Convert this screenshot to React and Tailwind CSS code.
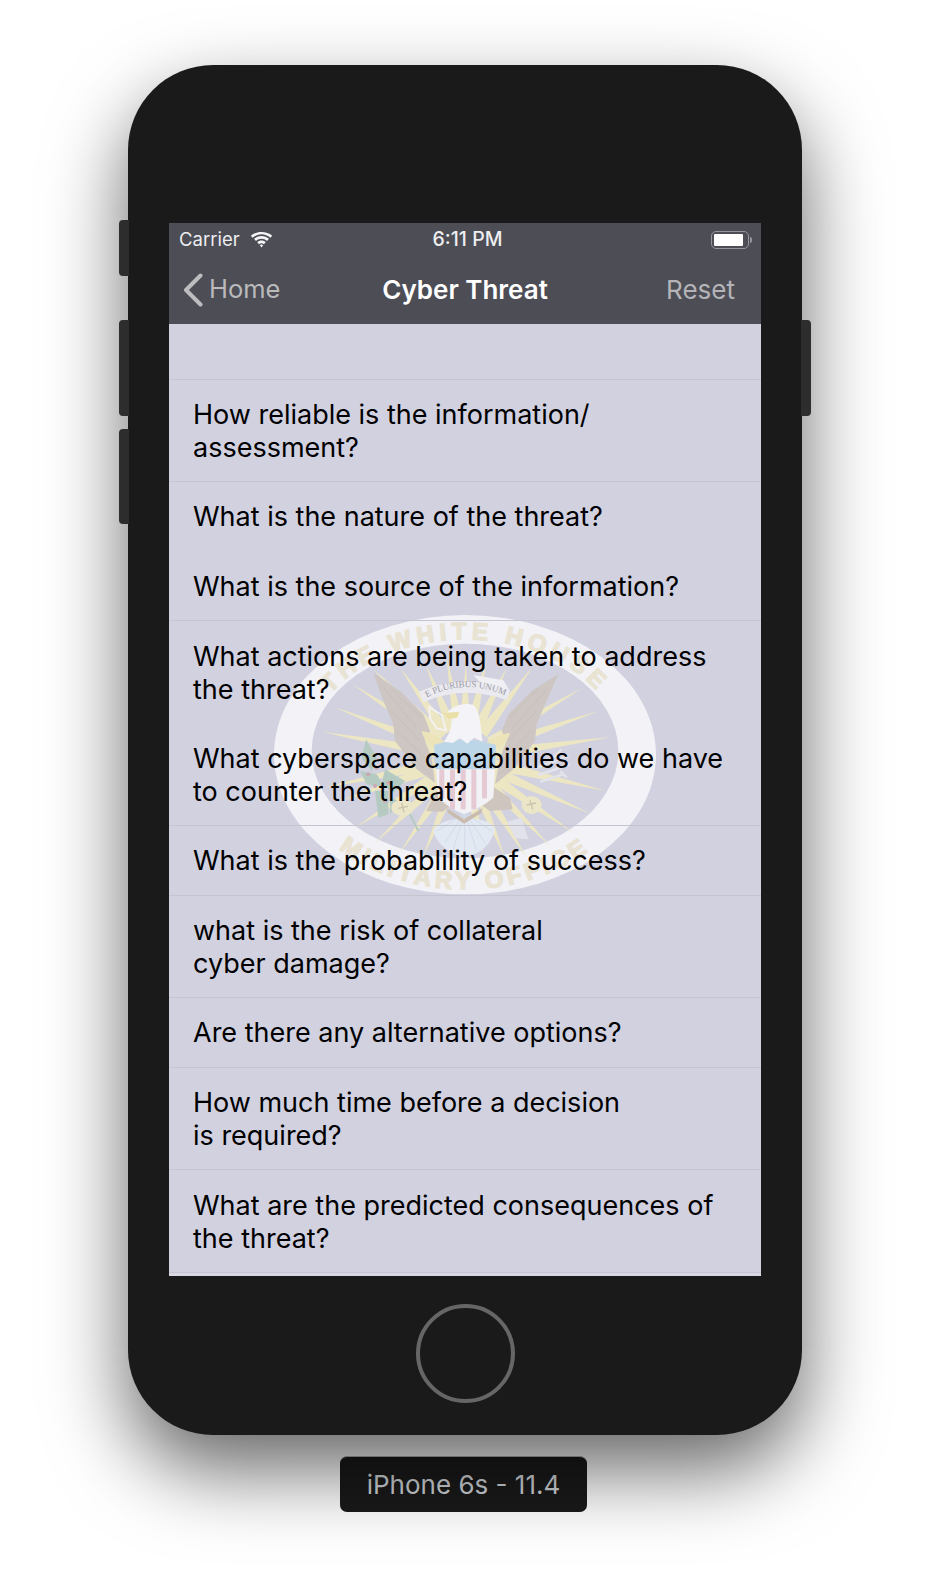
import React from "react";

const rows = [
  { h: "h-[56px]", lines: [], sep: true },
  { h: "h-[102px]", lines: ["How reliable is the information/", "assessment?"], sep: true },
  { h: "h-[70px] pb-[2px]", lines: ["What is the nature of the threat?"], sep: false },
  { h: "h-[69px]", lines: ["What is the source of the information?"], sep: true },
  { h: "h-[102px] pt-[2px]", lines: ["What actions are being taken to address", "the threat?"], sep: false },
  { h: "h-[103px] pt-[2px]", lines: ["What cyberspace capabilities do we have", "to counter the threat?"], sep: true },
  { h: "h-[70px]", lines: ["What is the probablility of success?"], sep: true },
  { h: "h-[102px]", lines: ["what is the risk of collateral", "cyber damage?"], sep: true },
  { h: "h-[70px]", lines: ["Are there any alternative options?"], sep: true },
  { h: "h-[102px] pt-[1px]", lines: ["How much time before a decision", "is required?"], sep: true },
  { h: "h-[103px] pt-[2px]", lines: ["What are the predicted consequences of", "the threat?"], sep: true },
];

const tips = [
  [340,205],[278,250],[222,318],[185,392],[420,200],[497,190],[560,170],[618,190],[680,175],[740,200],[820,195],
  [965,262],[1015,330],[1055,408],[1040,570],[995,640],[940,695],[870,735],[800,770],[735,770],[670,760],
  [285,680],[345,725],[420,755],[490,765],[240,600],[190,560],
];

function ray([x, y], i) {
  const cx = 612, cy = 470;
  const dx = x - cx, dy = y - cy;
  const len = Math.hypot(dx, dy);
  const ux = dx / len, uy = dy / len;
  const w = 17;
  return (
    <polygon
      key={i}
      points={`${x},${y} ${cx + ux * 90 - uy * w},${cy + uy * 90 + ux * w} ${cx + ux * 90 + uy * w},${cy + uy * 90 - ux * w}`}
      fill="#ece6c2"
    />
  );
}

const leftFeathers = ["M370,260 L470,380", "M395,330 L480,420", "M410,390 L495,470", "M440,450 L515,525", "M395,265 L485,350"];
const rightFeathers = ["M860,265 L760,380", "M830,330 L745,420", "M815,390 L735,470", "M785,445 L720,520", "M835,262 L750,350"];
const tailFeathers = [
  "M610,640 L530,690", "M610,640 L555,725", "M612,640 L580,745", "M614,640 L614,755",
  "M616,640 L648,745", "M618,640 L675,725", "M620,640 L695,690",
];
const stripeX = [538, 570, 602, 634, 666];
const berries = [[325,520],[350,500],[345,555],[385,545],[375,600]];
const leaves = [
  "M318,415 L350,470 L335,510 L305,470 Z",
  "M300,510 L350,520 L375,560 L320,550 Z",
  "M375,505 L435,540 L400,575 L365,550 Z",
  "M345,570 L385,570 L385,640 L355,650 Z",
  "M390,590 L420,600 L390,640 Z",
];

function Seal() {
  return (
    <svg viewBox="0 0 1230 930" className="absolute left-[91px] top-[277px] w-[410px] h-[310px]">
      <defs>
        <path id="sealTop" d="M145,450 A470,335 0 0 1 1085,450" />
        <path id="sealBottom" d="M80,450 A535,415 0 0 0 1150,450" />
        <path id="sealBanner" d="M490,295 Q610,225 745,288" />
      </defs>
      <path
        fillRule="evenodd"
        fill="#f2f2f7"
        d="M42,461 A573,419 0 1 1 1188,461 A573,419 0 1 1 42,461 Z M155,450 A460,322 0 1 0 1075,450 A460,322 0 1 0 155,450 Z"
      />
      <text fontFamily="'Liberation Sans', sans-serif" fontWeight="700" fontSize="72" letterSpacing="15" fill="#e9e3d3" stroke="#e9e3d3" strokeWidth="4" textAnchor="middle">
        <textPath href="#sealTop" startOffset="50%">THE WHITE HOUSE</textPath>
      </text>
      <text fontFamily="'Liberation Sans', sans-serif" fontWeight="700" fontSize="72" letterSpacing="13" fill="#e9e3d3" stroke="#e9e3d3" strokeWidth="4" textAnchor="middle">
        <textPath href="#sealBottom" startOffset="50%">MILITARY OFFICE</textPath>
      </text>
      {tips.map(ray)}

      <path d="M340,215 L420,270 L490,340 L510,390 L495,420 L515,470 L525,545 L470,505 L405,420 L400,370 L370,300 Z" fill="#cdc6c3" />
      <path d="M895,220 L815,270 L745,340 L725,390 L740,420 L720,470 L705,550 L760,505 L825,420 L830,370 L860,300 Z" fill="#cdc6c3" />
      <g stroke="#c7bfbc" strokeWidth="3" fill="none">
        {leftFeathers.map((d) => <path key={d} d={d} />)}
        {rightFeathers.map((d) => <path key={d} d={d} />)}
      </g>
      <path d="M695,555 L750,590 L758,625 L690,630 L660,610 Z M530,570 L498,630 L548,632 L575,610 Z" fill="#cdc5be" />

      <path d="M520,690 C540,640 690,640 705,685 C695,730 660,760 615,768 C570,760 530,730 520,690 Z" fill="#e3e9f3" />
      <g stroke="#d3dcea" strokeWidth="3" fill="none">
        {tailFeathers.map((d) => <path key={d} d={d} />)}
      </g>
      <path d="M560,622 L612,655 L668,622 L664,636 L612,668 L564,636 Z" fill="#c9bcae" />

      <path d="M485,390 Q520,395 558,425 L540,445 Q495,435 485,390 Z M750,395 Q715,400 672,428 L695,445 Q740,435 750,395 Z" fill="#ece4b8" />
      <path d="M522,432 Q610,400 708,432 L705,505 L528,505 Z" fill="#bcd6e8" />
      <path d="M528,505 L705,505 L700,590 Q665,620 612,640 Q565,620 535,590 Z" fill="#f2f2f6" />
      {stripeX.map((x) => (
        <path key={x} d={`M${x},505 h15 V${x < 550 || x > 660 ? 592 : 625} h-15 Z`} fill="#e5c9d3" />
      ))}

      <path d="M552,422 C572,395 576,372 574,352 L556,342 C570,318 610,303 640,312 C662,330 662,385 668,422 L642,410 L622,428 L600,412 L578,426 Z" fill="#f4f4f8" />
      <path d="M548,336 L598,332 L592,350 L566,354 Z" fill="#ebdfa8" />
      <path d="M508,318 L545,342 L558,388 L530,382 L510,352 Z" fill="none" stroke="#f3f3f7" strokeWidth="5" />

      <path d="M476,272 Q612,215 750,268 L742,298 Q612,250 490,304 Z" fill="#eaeaf0" />
      <path d="M640,222 L730,238 L748,268 L665,248 Z" fill="#f0eff4" />
      <text fontFamily="'Liberation Serif', serif" fontSize="27" fill="#9a9aa4" textAnchor="middle">
        <textPath href="#sealBanner" startOffset="50%">E PLURIBUS UNUM</textPath>
      </text>

      {leaves.map((d) => <path key={d} d={d} fill="#b5cbc1" />)}
      {berries.map(([cx, cy]) => <circle key={cx} cx={cx} cy={cy} r="6" fill="#c9a8b1" />)}
      <path d="M445,630 L475,690" stroke="#b5cbc1" strokeWidth="6" />
      <ellipse cx="428" cy="620" rx="34" ry="25" fill="#ece6c8" />
      <ellipse cx="815" cy="612" rx="30" ry="27" fill="#ece6c8" />
      <path d="M810,598 L818,625 M800,612 L828,606 M425,606 L432,634 M414,622 L444,616" stroke="#c9c3ae" strokeWidth="4" />
      <path d="M830,500 L925,465 M835,522 L930,490 M840,542 L910,520 M880,470 L905,445 M900,510 L920,530" stroke="#e3e3ec" strokeWidth="8" />
      <path d="M742,662 L785,650 L805,715 L765,712 Z" fill="#e2e2ea" />
    </svg>
  );
}

export default function App() {
  return (
    <div className="w-[930px] h-[1596px] bg-white overflow-hidden flex flex-col items-center pt-[65px] font-['Inter',sans-serif]">
      <div className="relative w-[674px] h-[1370px] shrink-0 rounded-[85px] bg-[#1a1a1a] shadow-[0_35px_80px_rgba(0,0,0,0.6)] pt-[158px] flex flex-col items-center">
        <div className="absolute left-[-9px] top-[155px] w-[10px] h-[56px] rounded-l-[4px] bg-[#2d2d2d]" />
        <div className="absolute left-[-9px] top-[255px] w-[10px] h-[96px] rounded-l-[4px] bg-[#2d2d2d]" />
        <div className="absolute left-[-9px] top-[364px] w-[10px] h-[95px] rounded-l-[4px] bg-[#2d2d2d]" />
        <div className="absolute right-[-9px] top-[255px] w-[10px] h-[96px] rounded-r-[4px] bg-[#2d2d2d]" />

        <div className="relative w-[592px] h-[1053px] shrink-0 overflow-hidden bg-[#d1d1e0] flex flex-col">
          <div className="h-[101px] shrink-0 bg-[#4c4d55] flex flex-col">
            <div className="relative h-[34px] shrink-0 flex items-center pl-[10px] pr-[9px] text-[19px] text-[#eeeef0]">
              <span className="text-[18.500px]">Carrier</span>
              <svg viewBox="0 0 24 17" className="ml-[10px] w-[23px] h-[16px]" fill="#f6f6f8">
                <path d="M12 2.4c3.6 0 6.9 1.4 9.4 3.7l2-2.2C20.300 1.400 16.300 0 12 0S3.700 1.400.6 3.900l2 2.200C5.100 3.800 8.400 2.400 12 2.400z" />
                <path d="M12 7.300c2.200 0 4.300.8 5.900 2.200l2-2.200c-2.100-1.900-4.900-3-7.900-3s-5.800 1.100-7.900 3l2 2.200c1.600-1.400 3.700-2.200 5.900-2.200z" />
                <path d="M12 12c1 0 1.900.4 2.600.9l2-2.200C15.400 9.700 13.800 9 12 9s-3.400.7-4.600 1.700l2 2.200c.7-.5 1.600-.9 2.600-.9z" />
                <path d="M12 13.400c-.7 0-1.300.3-1.700.7L12 16.500l1.700-2.400c-.4-.4-1-.7-1.700-.7z" />
              </svg>
              <span className="absolute left-[5px] right-0 text-center text-[19.500px] font-medium">6:11 PM</span>
              <div className="ml-auto flex items-center">
                <div className="w-[38px] h-[18px] rounded-[5px] border border-[#96969c] p-[2px]">
                  <div className="w-[29px] h-full rounded-[1px] bg-white" />
                </div>
                <div className="w-[2px] h-[6px] rounded-r-[2px] bg-[#96969c] ml-px" />
              </div>
            </div>
            <div className="relative flex-1 flex items-center pl-[14px] pr-[26px] pb-[2px] text-[26px]">
              <svg viewBox="0 0 20 34" className="w-[20px] h-[34px] mr-[6px]" fill="none" stroke="#bdbdc0" strokeWidth="4" strokeLinecap="round" strokeLinejoin="round">
                <path d="M17.500 2.500 L3 17 L17.500 31.500" />
              </svg>
              <span className="text-[25.500px] text-[#bababd]">Home</span>
              <span className="absolute left-0 right-0 text-center font-semibold text-white">Cyber Threat</span>
              <span className="ml-auto text-[#b4b4b8]">Reset</span>
            </div>
          </div>

          <div className="relative flex-1 flex flex-col">
            <Seal />
            <div className="relative flex flex-col">
              {rows.map((r, i) => (
                <div
                  key={i}
                  className={`${r.h} shrink-0 flex flex-col justify-center pl-[24px] text-[27px] leading-[33px] text-black whitespace-nowrap ${
                    r.sep ? "border-b border-[#c5c5d2]" : ""
                  }`}
                >
                  {r.lines.map((l) => (
                    <div key={l}>{l}</div>
                  ))}
                </div>
              ))}
            </div>
            <div className="relative flex-1 bg-[#d8d8e5]" />
          </div>
        </div>

        <div className="mt-[28px] w-[99px] h-[99px] rounded-full border-[4px] border-[#666666] shrink-0" />
      </div>

      <div className="mt-[21px] ml-[-3px] w-[247px] h-[56px] rounded-[7px] bg-[#1a1a1a] border-t border-[#b0b0b0] flex items-center justify-center text-[26px] text-[#d4d8dc]">
        iPhone 6s - 11.4
      </div>
    </div>
  );
}
